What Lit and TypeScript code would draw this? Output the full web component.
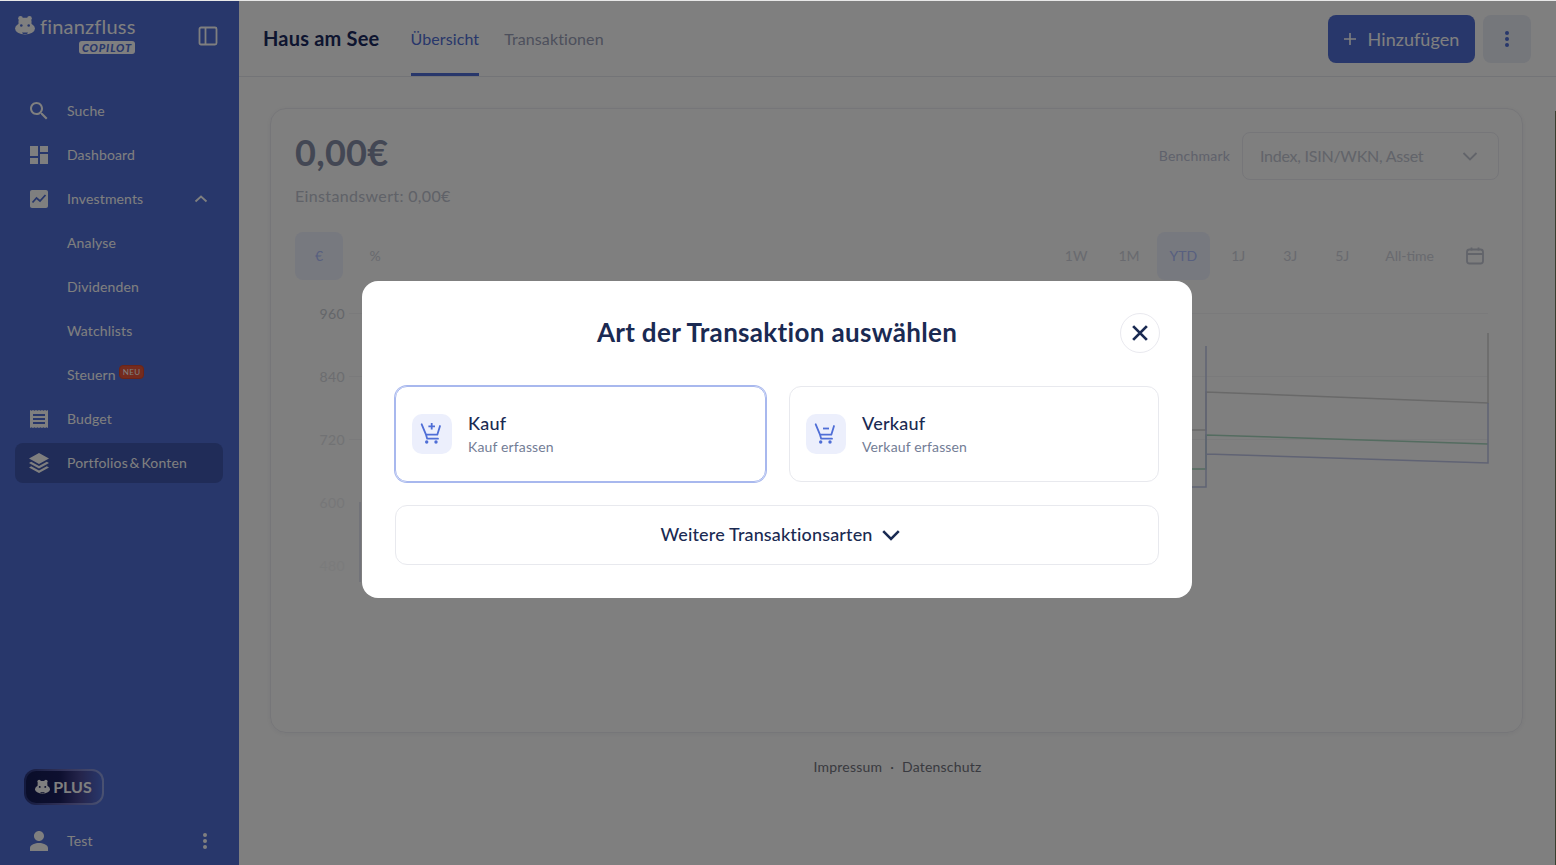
import { LitElement, html, css, svg } from 'lit';
import { customElement } from 'lit/decorators.js';

const hippo = (cut: string) => svg`
  <circle cx="5.500" cy="3.200" r="2.300"/>
  <circle cx="14.500" cy="3.200" r="2.300"/>
  <rect x="3.500" y="2.800" width="13" height="9" rx="3.500"/>
  <ellipse cx="10" cy="13.500" rx="10" ry="6"/>
  <circle cx="6.300" cy="10.500" r="1.300" fill="${cut}"/>
  <circle cx="13.700" cy="10.500" r="1.300" fill="${cut}"/>
  <path d="M7 17.500h6l-1 1.500H8z" fill="${cut}"/>`;

const navIcons = {
  search: svg`<path d="M15.500 14h-.79l-.28-.27C15.410 12.590 16 11.110 16 9.500 16 5.910 13.090 3 9.500 3S3 5.910 3 9.500 5.910 16 9.500 16c1.610 0 3.090-.59 4.230-1.570l.27.28v.79l5 4.990L20.490 19l-4.990-5zm-6 0C7.010 14 5 11.990 5 9.500S7.010 5 9.500 5 14 7.010 14 9.500 11.990 14 9.500 14z"/>`,
  dashboard: svg`<path d="M3 13h8V3H3v10zm0 8h8v-6H3v6zm10 0h8V11h-8v10zm0-18v6h8V3h-8z"/>`,
  chart: svg`<path d="M19 3H5c-1.100 0-2 .9-2 2v14c0 1.100.9 2 2 2h14c1.100 0 2-.9 2-2V5c0-1.100-.9-2-2-2z"/><path d="M5.500 15.500l4-4.500 3.500 3 5.500-6" fill="none" stroke="#506ed6" stroke-width="1.800"/>`,
  budget: svg`<path d="M18 17H6v-2h12v2zm0-4H6v-2h12v2zm0-4H6V7h12v2zM3 21l1.500-.75L6 21l1.500-.75L9 21l1.500-.75L12 21l1.500-.75L15 21l1.500-.75L18 21l1.500-.75L21 21V3l-1.500.75L18 3l-1.500.75L15 3l-1.500.75L12 3l-1.500.75L9 3l-1.500.75L6 3l-1.500.75L3 3v18z"/>`,
  layers: svg`<path d="M12 2l10 5.500-10 5.500L2 7.500 12 2z"/><path d="M12 15l-7.800-4.300L2 12l10 5.500L22 12l-2.200-1.300L12 15z"/><path d="M12 19.500l-7.800-4.300L2 16.500 12 22l10-5.500-2.200-1.300-7.800 4.300z"/>`,
};

const cartBase = svg`<path d="M1.700 2.300L6 12.700h11.300L20 4M6 12.700l1.200 4H18" fill="none" stroke="#4f6ed6" stroke-width="1.800" stroke-linejoin="round" stroke-linecap="round"/><circle cx="6.700" cy="20" r="1.700" fill="#4f6ed6"/><circle cx="16" cy="20" r="1.700" fill="#4f6ed6"/>`;

@customElement('app-root')
export class AppRoot extends LitElement {
  static styles = css`
    :host {
      display: block;
      position: relative;
      height: 865px;
      overflow: hidden;
      background: #fff;
      font-family: Lato, 'Open Sans', sans-serif;
      color: #1a2a52;
    }

    .shell {
      display: flex;
      height: 865px;
    }

    /* sidebar */
    .sidebar {
      width: 239px;
      flex: none;
      background: #506ed6;
      color: #fff;
      display: flex;
      flex-direction: column;
      padding: 0 16px 0 15px;
      box-sizing: border-box;
    }
    .brand {
      height: 91px;
      display: flex;
      align-items: flex-start;
      justify-content: space-between;
      padding-top: 14px;
      box-sizing: border-box;
    }
    .logo-top {
      display: flex;
      align-items: center;
      gap: 5px;
      font-size: 20px;
      line-height: 24px;
      letter-spacing: 0.2px;
      height: 24px;
    }
    .logo-top svg {
      width: 20px;
      height: 20px;
      fill: #fff;
      margin-top: -2px;
    }
    .copilot {
      display: block;
      margin: 3px 0 0 64px;
      width: 56px;
      height: 13px;
      border-radius: 3px;
      background: #fff;
      color: #506ed6;
      font-size: 11px;
      line-height: 13px;
      font-weight: 900;
      font-style: italic;
      text-align: center;
      letter-spacing: 0.9px;
    }
    .panel-toggle {
      width: 24px;
      height: 24px;
      margin: 10px 3px 0 0;
      fill: none;
      stroke: #fff;
      stroke-width: 1.800;
    }
    nav {
      display: flex;
      flex-direction: column;
      gap: 4px;
    }
    .item {
      display: flex;
      align-items: center;
      height: 40px;
      padding: 0 12px;
      gap: 16px;
      border-radius: 8px;
      font-size: 14px;
      letter-spacing: 0.15px;
      word-spacing: -2px;
      white-space: nowrap;
    }
    .item > span:not(.neu) {
      padding-bottom: 2px;
    }
    .item svg.ic {
      width: 24px;
      height: 24px;
      fill: #fff;
      flex: none;
    }
    .item.sub {
      padding-left: 52px;
    }
    .item.active {
      background: #4058b0;
    }
    .chev {
      margin: 0 2px 0 auto;
      width: 16px;
      height: 16px;
      fill: none;
      stroke: #fff;
      stroke-width: 1.800;
    }
    .neu {
      margin: -6px 0 0 -13px;
      padding: 0 3px;
      background: #e8563c;
      border: 1px solid #d8492f;
      border-radius: 4px;
      font-size: 8px;
      line-height: 12px;
      letter-spacing: 0.3px;
    }
    .spacer {
      flex: 1;
    }
    .plus {
      width: 80px;
      height: 36px;
      margin-left: 9px;
      box-sizing: border-box;
      border: 2px solid transparent;
      border-radius: 12px;
      background:
        linear-gradient(90deg, #141c54 0%, #1c2060 45%, #4a4a98 72%, #506ed6 100%) padding-box,
        linear-gradient(90deg, #28347c 0%, #6c6cb8 55%, #94a4e4 100%) border-box;
      display: flex;
      align-items: center;
      justify-content: center;
      gap: 3px;
      font-size: 16px;
      font-weight: 700;
      letter-spacing: 0;
      padding: 0 1px 2px 0;
    }
    .plus svg {
      width: 15px;
      height: 15px;
      fill: #fff;
      margin-top: 1px;
    }
    .user {
      margin: 16px 0 4px;
      justify-content: flex-start;
    }
    .dots {
      width: 24px;
      height: 24px;
      fill: currentColor;
      flex: none;
    }
    .user .dots {
      margin-left: auto;
      margin-right: -6px;
    }

    /* main column */
    main {
      flex: 1;
      min-width: 0;
      background: #fefefe;
      display: flex;
      flex-direction: column;
    }
    header {
      height: 77px;
      flex: none;
      box-sizing: border-box;
      border-bottom: 1px solid #e6e8ee;
      padding: 0 25px 0 24px;
      display: flex;
      align-items: stretch;
    }
    h1 {
      margin: 0 31px 0 0;
      align-self: center;
      font-size: 20px;
      font-weight: 700;
      letter-spacing: 0.2px;
      color: #1b2a60;
    }
    .tab {
      display: flex;
      align-items: center;
      margin-right: 25px;
      font-size: 16px;
      letter-spacing: 0.1px;
      color: #9aa0b8;
      border-bottom: 3px solid transparent;
      height: 76px;
      box-sizing: border-box;
      padding-top: 3px;
    }
    .tab.on {
      color: #506ed6;
      border-bottom-color: #506ed6;
    }
    .head-actions {
      margin-left: auto;
      display: flex;
      align-items: center;
      gap: 8px;
      padding-top: 2px;
    }
    .add {
      width: 147px;
      height: 48px;
      box-sizing: border-box;
      padding-right: 2px;
      border-radius: 8px;
      background: #506ed6;
      color: #fff;
      display: flex;
      align-items: center;
      justify-content: center;
      gap: 10px;
      font-size: 18px;
      letter-spacing: 0.05px;
    }
    .add svg {
      width: 16px;
      height: 16px;
      stroke: #fff;
      stroke-width: 1.600;
      fill: none;
    }
    .more {
      width: 48px;
      height: 48px;
      border-radius: 8px;
      background: #ebeef7;
      color: #506ed6;
      display: flex;
      align-items: center;
      justify-content: center;
    }
    .content {
      flex: 1;
      padding: 31px 33px 0 31px;
      display: flex;
      flex-direction: column;
    }
    .card {
      height: 625px;
      box-sizing: border-box;
      border: 1px solid #ececf2;
      border-radius: 16px;
      padding: 23px 23px 0 24px;
      box-shadow: 0 1px 4px rgba(20, 30, 70, 0.05);
    }
    .card-top {
      display: flex;
      justify-content: space-between;
      height: 100px;
    }
    .value {
      margin-top: -1px;
      font-size: 36px;
      line-height: 42px;
      font-weight: 700;
      color: #868fa8;
      letter-spacing: 0.3px;
    }
    .cost {
      margin-top: 12px;
      font-size: 16px;
      line-height: 22px;
      color: #c0c4d0;
      letter-spacing: 0.35px;
    }
    .bench {
      display: flex;
      align-items: center;
      gap: 12px;
      height: 48px;
    }
    .bench-label {
      font-size: 14px;
      color: #bec4d8;
      letter-spacing: 0.2px;
      padding-bottom: 2px;
    }
    .select {
      width: 257px;
      height: 48px;
      box-sizing: border-box;
      border: 1px solid #ededf3;
      border-radius: 8px;
      padding: 0 18px 0 17px;
      display: flex;
      align-items: center;
      justify-content: space-between;
      font-size: 16px;
      letter-spacing: -0.25px;
      color: #c4c8d4;
    }
    .select span {
      padding-bottom: 2px;
    }
    .select svg {
      width: 20px;
      height: 20px;
      fill: none;
      stroke: #c4c8d4;
      stroke-width: 1.800;
    }
    .controls {
      display: flex;
      justify-content: space-between;
      align-items: center;
    }
    .group {
      display: flex;
      align-items: center;
    }
    .pill {
      height: 48px;
      min-width: 48px;
      padding: 0 14px 2px;
      box-sizing: border-box;
      display: flex;
      align-items: center;
      justify-content: center;
      border-radius: 8px;
      font-size: 14px;
      color: #d2d5de;
    }
    .pill.on {
      background: #eef2ff;
      color: #b0c0ff;
    }
    .pill.pct {
      margin-left: 8px;
    }
    .range .pill {
      margin-left: 3px;
    }
    .range .pill.ytd {
      padding: 0 13px 2px;
    }
    .range .pill.j {
      margin-left: 4px;
    }
    .range .pill.far {
      margin-left: 5px;
    }
    .cal {
      width: 20px;
      height: 20px;
      margin: 0 14px 0 17px;
      fill: none;
      stroke: #c4c8d4;
      stroke-width: 1.800;
    }
    .plot {
      position: relative;
      margin-top: 3px;
      height: 300px;
    }
    .plot svg {
      position: absolute;
      left: 0;
      top: 0;
      width: 1203px;
      height: 300px;
    }
    .y-axis {
      width: 50px;
      padding-top: 21px;
      display: flex;
      flex-direction: column;
      align-items: flex-end;
      font-size: 14px;
      line-height: 20px;
      letter-spacing: 0.4px;
      color: #c9ccd4;
    }
    .y-axis span {
      height: 63.100px;
    }
    .y-axis span:nth-child(2) { opacity: 0.7; }
    .y-axis span:nth-child(3) { opacity: 0.5; }
    .y-axis span:nth-child(4) { opacity: 0.3; }
    .y-axis span:nth-child(5) { opacity: 0.15; }
    footer {
      margin-top: 25px;
      padding-left: 2px;
      display: flex;
      justify-content: center;
      gap: 8px;
      font-size: 14px;
      line-height: 18px;
      letter-spacing: 0.2px;
      color: #737580;
    }

    /* dialog */
    .overlay {
      position: absolute;
      left: 0;
      top: 1px;
      right: 0;
      bottom: 0;
      background: rgba(0, 0, 0, 0.5);
      display: flex;
      justify-content: center;
      padding: 280px 2px 0 0;
      box-sizing: border-box;
    }
    .overlay::before {
      content: '';
      position: absolute;
      left: 0;
      right: 0;
      top: -1px;
      height: 1px;
      background: #e8e8e8;
    }
    .overlay::after {
      content: '';
      position: absolute;
      right: 0;
      top: 110px;
      bottom: 0;
      width: 1px;
      background: #3a3f30;
    }
    .dialog {
      width: 830px;
      height: 317px;
      box-sizing: border-box;
      background: #fff;
      border-radius: 16px;
      padding: 32px 33px;
      display: flex;
      flex-direction: column;
    }
    .dialog-head {
      position: relative;
      height: 40px;
      display: flex;
      align-items: center;
      justify-content: center;
      margin-bottom: 33px;
    }
    h2 {
      margin: 0;
      padding-bottom: 2px;
      font-size: 26px;
      font-weight: 700;
      letter-spacing: 0.32px;
      color: #1a2a52;
    }
    .close {
      position: absolute;
      right: -1px;
      top: 0;
      width: 40px;
      height: 40px;
      box-sizing: border-box;
      border: 1px solid #e9e9ef;
      border-radius: 50%;
      display: flex;
      align-items: center;
      justify-content: center;
    }
    .close svg {
      width: 20px;
      height: 20px;
      stroke: #1a2a52;
      stroke-width: 2.200;
      fill: none;
    }
    .options {
      display: grid;
      grid-template-columns: 371px 370px;
      column-gap: 23px;
    }
    .option {
      height: 96px;
      box-sizing: border-box;
      border: 1px solid #e8e9ee;
      border-radius: 12px;
      padding: 0 16px;
      display: flex;
      align-items: center;
      gap: 16px;
    }
    .option.on {
      border-color: #a8b8ee;
      box-shadow: 0 0 0 1px #a8b8ee;
    }
    .icon-box {
      width: 40px;
      height: 40px;
      border-radius: 10px;
      background: #eceffc;
      display: flex;
      align-items: center;
      justify-content: center;
    }
    .icon-box svg {
      width: 24px;
      height: 24px;
    }
    .opt-title {
      font-size: 18px;
      line-height: 24px;
      font-weight: 500;
      letter-spacing: 0.25px;
      margin-top: -2px;
    }
    .opt-sub {
      margin-top: 3px;
      font-size: 14px;
      line-height: 18px;
      letter-spacing: 0.15px;
      color: #737d96;
    }
    .more-types {
      margin-top: 23px;
      height: 60px;
      box-sizing: border-box;
      border: 1px solid #e8e9ee;
      border-radius: 12px;
      padding-left: 7px;
      display: flex;
      align-items: center;
      justify-content: center;
      gap: 8px;
      font-size: 18px;
      font-weight: 500;
      letter-spacing: 0.15px;
    }
    .more-types span {
      padding-bottom: 2px;
    }
    .more-types svg {
      width: 20px;
      height: 20px;
      fill: none;
      stroke: #1a2a52;
      stroke-width: 2.300;
    }
  `;

  private navItem(label: string, icon: unknown, active = false) {
    return html`
      <div class="item ${active ? 'active' : ''}">
        <svg class="ic" viewBox="0 0 24 24">${icon}</svg>
        <span>${label}</span>
      </div>
    `;
  }

  private kebab() {
    return html`<svg class="dots" viewBox="0 0 24 24">
      <circle cx="12" cy="6" r="2"></circle>
      <circle cx="12" cy="12" r="2"></circle>
      <circle cx="12" cy="18" r="2"></circle>
    </svg>`;
  }

  private renderSidebar() {
    return html`
      <aside class="sidebar">
        <div class="brand">
          <div>
            <div class="logo-top">
              <svg viewBox="0 0 20 20">${hippo('#506ed6')}</svg>
              <span>finanzfluss</span>
            </div>
            <span class="copilot">COPILOT</span>
          </div>
          <svg class="panel-toggle" viewBox="0 0 24 24">
            <rect x="3.500" y="3.500" width="17" height="17" rx="1.500"></rect>
            <path d="M9.500 3.500v17"></path>
          </svg>
        </div>
        <nav>
          ${this.navItem('Suche', navIcons.search)}
          ${this.navItem('Dashboard', navIcons.dashboard)}
          <div class="item">
            <svg class="ic" viewBox="0 0 24 24">${navIcons.chart}</svg>
            <span>Investments</span>
            <svg class="chev" viewBox="0 0 16 16"><path d="M2.500 10.500L8 5.500l5.500 5"></path></svg>
          </div>
          <div class="item sub"><span>Analyse</span></div>
          <div class="item sub"><span>Dividenden</span></div>
          <div class="item sub"><span>Watchlists</span></div>
          <div class="item sub"><span>Steuern</span> <span class="neu">NEU</span></div>
          ${this.navItem('Budget', navIcons.budget)}
          ${this.navItem('Portfolios & Konten', navIcons.layers, true)}
        </nav>
        <div class="spacer"></div>
        <div class="plus">
          <svg viewBox="0 0 20 20">${hippo('#141c54')}</svg>
          <span>PLUS</span>
        </div>
        <div class="item user">
          <svg class="ic" viewBox="0 0 24 24">
            <path d="M12 12c2.760 0 5-2.240 5-5s-2.240-5-5-5-5 2.240-5 5 2.240 5 5 5zm0 2c-3.500 0-9 1.600-9 5v3h18v-3c0-3.400-5.500-5-9-5z"></path>
          </svg>
          <span>Test</span>
          ${this.kebab()}
        </div>
      </aside>
    `;
  }

  private renderChart() {
    return html`
      <div class="plot">
        <div class="y-axis">
          <span>960</span><span>840</span><span>720</span><span>600</span><span>480</span>
        </div>
        <svg viewBox="0 0 1203 300" fill="none">
          <g stroke="#f4f4f6">
            <path d="M54 30.500H1193M54 93.500H1193M54 156.500H1193"></path>
          </g>
          <g stroke-width="1.500">
            <path d="M911 147H925V109L1207 120V50" stroke="#d2d2d2" transform="translate(-14 0)"></path>
            <path d="M911 186H925V152L1207 161" stroke="#a8d8c0" transform="translate(-14 0)"></path>
            <path d="M911 204H925V63M925 171L1207 180V120" stroke="#c0c6e8" transform="translate(-14 0)"></path>
            <path d="M65 219V299" stroke="#dcdfee"></path>
          </g>
        </svg>
      </div>
    `;
  }

  private renderMain() {
    return html`
      <main>
        <header>
          <h1>Haus am See</h1>
          <div class="tab on">Übersicht</div>
          <div class="tab">Transaktionen</div>
          <div class="head-actions">
            <div class="add">
              <svg viewBox="0 0 16 16"><path d="M8 2v12M2 8h12"></path></svg>
              <span>Hinzufügen</span>
            </div>
            <div class="more">${this.kebab()}</div>
          </div>
        </header>
        <div class="content">
          <section class="card">
            <div class="card-top">
              <div>
                <div class="value">0,00€</div>
                <div class="cost">Einstandswert: 0,00€</div>
              </div>
              <div class="bench">
                <span class="bench-label">Benchmark</span>
                <div class="select">
                  <span>Index, ISIN/WKN, Asset</span>
                  <svg viewBox="0 0 20 20"><path d="M3.500 7l6.500 6.500L16.500 7"></path></svg>
                </div>
              </div>
            </div>
            <div class="controls">
              <div class="group">
                <div class="pill on">€</div>
                <div class="pill pct">%</div>
              </div>
              <div class="group range">
                <div class="pill">1W</div>
                <div class="pill">1M</div>
                <div class="pill on ytd">YTD</div>
                <div class="pill j">1J</div>
                <div class="pill j">3J</div>
                <div class="pill j">5J</div>
                <div class="pill far">All-time</div>
                <svg class="cal" viewBox="0 0 20 20">
                  <rect x="2" y="3.500" width="16" height="14" rx="2.500"></rect>
                  <path d="M2 8h16M6.500 1.500v3M13.500 1.500v3"></path>
                </svg>
              </div>
            </div>
            ${this.renderChart()}
          </section>
          <footer><span>Impressum</span><span>·</span><span>Datenschutz</span></footer>
        </div>
      </main>
    `;
  }

  private renderDialog() {
    return html`
      <div class="overlay">
        <div class="dialog">
          <div class="dialog-head">
            <h2>Art der Transaktion auswählen</h2>
            <div class="close">
              <svg viewBox="0 0 16 16"><path d="M2.500 2.500l11 11M13.500 2.500l-11 11"></path></svg>
            </div>
          </div>
          <div class="options">
            <div class="option on">
              <div class="icon-box">
                <svg viewBox="0 0 24 24">
                  ${cartBase}
                  <path d="M11.700 1v6.600M8.400 4.300H15" stroke="#4f6ed6" stroke-width="1.800" fill="none"></path>
                </svg>
              </div>
              <div>
                <div class="opt-title">Kauf</div>
                <div class="opt-sub">Kauf erfassen</div>
              </div>
            </div>
            <div class="option">
              <div class="icon-box">
                <svg viewBox="0 0 24 24">
                  ${cartBase}
                  <path d="M9 6.500h6" stroke="#4f6ed6" stroke-width="1.800" fill="none"></path>
                </svg>
              </div>
              <div>
                <div class="opt-title">Verkauf</div>
                <div class="opt-sub">Verkauf erfassen</div>
              </div>
            </div>
          </div>
          <div class="more-types">
            <span>Weitere Transaktionsarten</span>
            <svg viewBox="0 0 18 18"><path d="M2 5.500l7 7 7-7"></path></svg>
          </div>
        </div>
      </div>
    `;
  }

  render() {
    return html`
      <div class="shell">${this.renderSidebar()} ${this.renderMain()}</div>
      ${this.renderDialog()}
    `;
  }
}
